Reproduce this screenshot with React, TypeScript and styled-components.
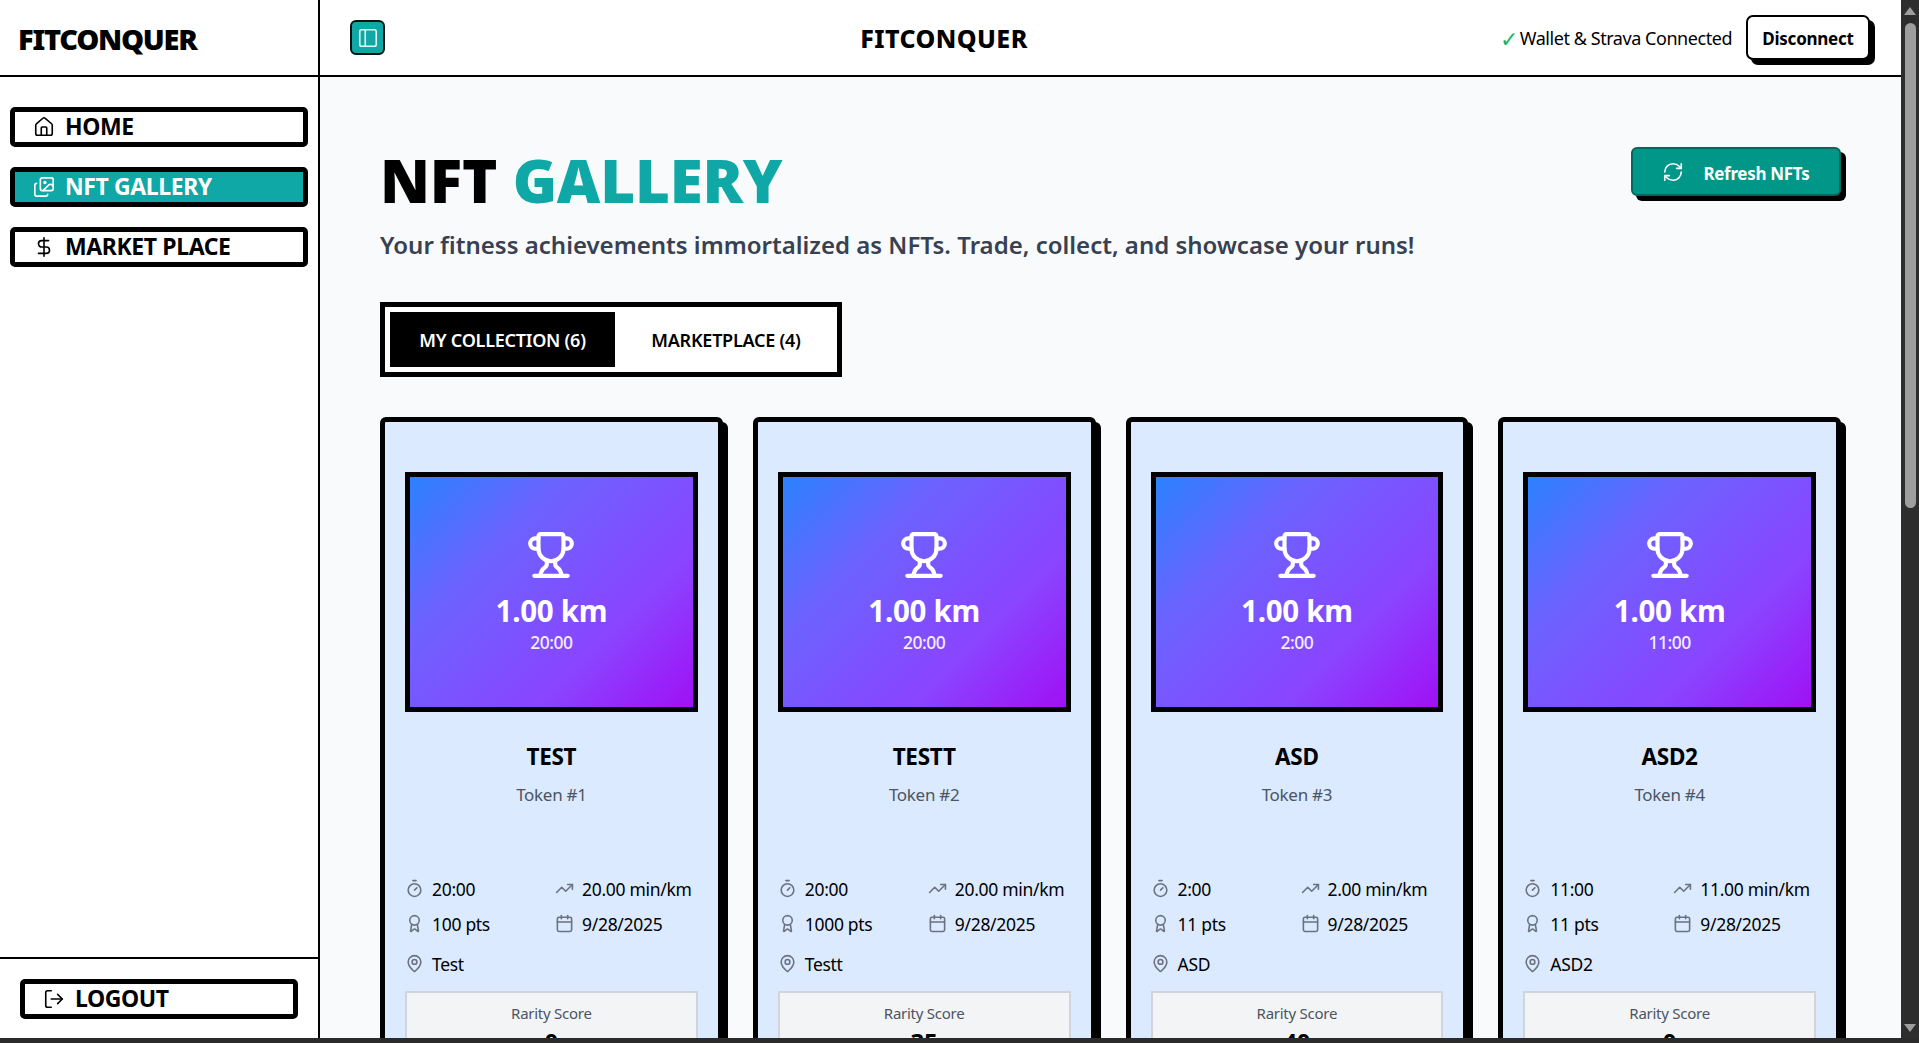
import React from "react";
import styled, { createGlobalStyle } from "styled-components";
import {
  Award,
  Calendar,
  DollarSign,
  Home,
  Images,
  LogOut,
  MapPin,
  PanelLeft,
  RefreshCw,
  Timer,
  TrendingUp,
  Trophy,
} from "lucide-react";

const FONT = `"Noto Sans", "Open Sans", "Liberation Sans", sans-serif`;
const TEAL = "#0fa8a6";

const Global = createGlobalStyle`
  html, body { margin: 0; padding: 0; height: 100%; overflow: hidden; background: #fff; }
  #root { height: 100%; }
  * { box-sizing: border-box; }
  body { font-family: ${FONT}; color: #000; }
`;

const Frame = styled.div`
  height: 1043px;
  display: flex;
  flex-direction: column;
  overflow: hidden;
`;
const Row = styled.div`
  flex: 1;
  min-height: 0;
  display: flex;
`;
const BottomBand = styled.div`
  height: 5px;
  flex: none;
  background: #2b2b2b;
`;

const Sidebar = styled.aside`
  width: 320px;
  flex: none;
  border-right: 2px solid #000;
  display: flex;
  flex-direction: column;
  background: #fff;
`;
const Logo = styled.div`
  height: 77px;
  flex: none;
  border-bottom: 2px solid #000;
  padding: 2px 18px 0;
  display: flex;
  align-items: center;
  font-size: 29px;
  font-weight: 900;
  letter-spacing: -1.25px;
`;
const Nav = styled.nav`
  flex: 1;
  padding: 30px 10px 0;
  display: flex;
  flex-direction: column;
  gap: 20px;
`;
const NavItem = styled.div<{ $active?: boolean }>`
  height: 40px;
  border: 5px solid #000;
  border-radius: 5px;
  display: flex;
  align-items: center;
  gap: 10px;
  padding: 0 0 2px 18px;
  font-size: 23px;
  font-weight: 700;
  letter-spacing: -0.4px;
  color: ${(p) => (p.$active ? "#fff" : "#000")};
  background: ${(p) => (p.$active ? TEAL : "#fff")};
  svg {
    flex: none;
    margin-top: 2px;
  }
`;
const SideFoot = styled.div`
  height: 81px;
  flex: none;
  border-top: 2px solid #000;
  padding: 20px 20px 0;
`;

const Main = styled.div`
  flex: 1;
  min-width: 0;
  display: flex;
  flex-direction: column;
`;
const Header = styled.header`
  height: 77px;
  flex: none;
  border-bottom: 2px solid #000;
  background: #fff;
  display: grid;
  grid-template-columns: 1fr auto 1fr;
  align-items: center;
  padding: 0 31px 0 30px;
`;
const ToggleButton = styled.div`
  width: 35px;
  height: 35px;
  border: 2px solid #111;
  border-radius: 6px;
  background: ${TEAL};
  color: #e4f8f7;
  display: flex;
  align-items: center;
  justify-content: center;
`;
const HeaderTitle = styled.div`
  font-size: 25px;
  font-weight: 800;
  letter-spacing: 0.4px;
  margin: 1px 332px 0 0;
`;
const HeaderRight = styled.div`
  display: flex;
  align-items: center;
  justify-content: flex-end;
  gap: 14px;
`;
const Status = styled.div`
  display: flex;
  align-items: center;
  font-size: 18px;
  letter-spacing: -0.45px;
  white-space: nowrap;
`;
const Check = styled.span`
  color: #10b95f;
  font-size: 22px;
  line-height: 24px;
  margin-right: 2px;
`;
const Disconnect = styled.div`
  width: 124px;
  height: 45px;
  border: 2px solid #000;
  border-radius: 7px;
  box-shadow: 5px 5px 0 #000;
  background: #fff;
  font-size: 17px;
  font-weight: 700;
  letter-spacing: -0.25px;
  padding-top: 1px;
  display: flex;
  align-items: center;
  justify-content: center;
`;

const Content = styled.main`
  flex: 1;
  min-height: 0;
  overflow: hidden;
  background: #f9fafb;
  padding: 69px 60px 0;
`;
const TopRow = styled.div`
  display: flex;
  justify-content: space-between;
  align-items: flex-start;
`;
const Title = styled.h1`
  margin: 0;
  font-size: 60px;
  line-height: 68px;
  font-weight: 900;
  letter-spacing: -0.2px;
`;
const TitleAccent = styled.span`
  color: ${TEAL};
`;
const Refresh = styled.div`
  width: 210px;
  height: 49px;
  margin-top: 1px;
  border: 2px solid #00695c;
  border-radius: 6px;
  box-shadow: 5px 5px 0 #000;
  background: #009688;
  color: #fff;
  font-size: 17px;
  font-weight: 700;
  letter-spacing: -0.3px;
  display: flex;
  align-items: center;
  justify-content: center;
  gap: 19px;
  padding-top: 3px;
  svg {
    margin-top: -3px;
  }
`;
const Subtitle = styled.p`
  margin: 15px 0 0;
  font-size: 24px;
  line-height: 32px;
  font-weight: 600;
  color: #374151;
  letter-spacing: 0;
`;
const Tabs = styled.div`
  margin-top: 41px;
  width: 462px;
  height: 75px;
  border: 5px solid #000;
  padding: 5px;
  background: #fff;
  display: flex;
  gap: 5px;
`;
const Tab = styled.div<{ $active?: boolean; $width: number }>`
  width: ${(p) => p.$width}px;
  display: flex;
  align-items: center;
  justify-content: center;
  font-size: 18px;
  font-weight: 600;
  letter-spacing: -0.25px;
  color: ${(p) => (p.$active ? "#fff" : "#000")};
  background: ${(p) => (p.$active ? "#000" : "#fff")};
`;

const Grid = styled.div`
  margin-top: 40px;
  display: grid;
  grid-template-columns: repeat(4, 1fr);
  gap: 30px;
`;
const Card = styled.article`
  height: 760px;
  border: 5px solid #000;
  border-radius: 6px;
  box-shadow: 5px 5px 0 #000;
  background: #dbeafe;
  padding: 50px 20px 0;
`;
const Art = styled.div`
  height: 240px;
  border: 5px solid #000;
  background: linear-gradient(135deg, #2b82ff 0%, #6c63ff 30%, #8a44ff 70%, #a010f5 100%);
  color: #fff;
  display: flex;
  flex-direction: column;
  align-items: center;
  justify-content: center;
  padding-bottom: 2px;
`;
const Distance = styled.div`
  margin-top: 11px;
  font-size: 29.5px;
  line-height: 40px;
  font-weight: 700;
  letter-spacing: -0.3px;
`;
const ArtTime = styled.div`
  font-size: 17.5px;
  line-height: 22px;
  font-weight: 500;
  letter-spacing: -0.5px;
  opacity: 0.9;
`;
const CardTitle = styled.h3`
  margin: 29px 0 0;
  text-align: center;
  font-size: 22.5px;
  line-height: 32px;
  font-weight: 700;
  letter-spacing: -0.3px;
`;
const TokenLine = styled.div`
  margin-top: 10px;
  height: 93px;
  text-align: center;
  font-size: 17px;
  line-height: 24px;
  color: #4b5563;
  letter-spacing: -0.3px;
`;
const Stats = styled.div`
  display: grid;
  grid-template-columns: 150px 1fr;
  row-gap: 10px;
`;
const Stat = styled.div`
  height: 25px;
  display: flex;
  align-items: center;
  gap: 8px;
  font-size: 17.5px;
  letter-spacing: -0.3px;
  white-space: nowrap;
  color: #000;
  svg {
    color: #6b7280;
    flex: none;
  }
`;
const Place = styled(Stat)`
  margin-top: 15px;
`;
const Rarity = styled.div`
  margin-top: 15px;
  height: 120px;
  border: 2px solid #d1d5db;
  background: #f3f4f6;
  text-align: center;
  padding-top: 10px;
`;
const RarityLabel = styled.div`
  font-size: 15px;
  line-height: 20px;
  color: #4b5563;
  letter-spacing: -0.25px;
`;
const RarityValue = styled.div`
  margin-top: 3px;
  font-size: 24px;
  line-height: 32px;
  font-weight: 700;
`;

const ScrollTrack = styled.div`
  width: 18px;
  flex: none;
  background: #2d2d2d;
  display: flex;
  flex-direction: column;
  align-items: center;
`;
const ScrollArrow = styled.div<{ $down?: boolean }>`
  width: 0;
  height: 0;
  flex: none;
  margin: ${(p) => (p.$down ? "auto 0 6px" : "7px 0 8px")};
  border-left: 6px solid transparent;
  border-right: 6px solid transparent;
  ${(p) =>
    p.$down
      ? "border-top: 8px solid #9e9e9e;"
      : "border-bottom: 8px solid #9e9e9e;"}
`;
const ScrollThumb = styled.div`
  width: 11px;
  height: 485px;
  flex: none;
  background: #9e9e9e;
  border-radius: 6px;
`;

const cards = [
  { name: "TEST", token: 1, time: "20:00", pace: "20.00", pts: 100, place: "Test", score: 0 },
  { name: "TESTT", token: 2, time: "20:00", pace: "20.00", pts: 1000, place: "Testt", score: 35 },
  { name: "ASD", token: 3, time: "2:00", pace: "2.00", pts: 11, place: "ASD", score: 40 },
  { name: "ASD2", token: 4, time: "11:00", pace: "11.00", pts: 11, place: "ASD2", score: 0 },
];

export default function App() {
  return (
    <Frame>
      <Global />
      <Row>
        <Sidebar>
          <Logo>FITCONQUER</Logo>
          <Nav>
            <NavItem>
              <Home size={22} strokeWidth={1.75} />
              HOME
            </NavItem>
            <NavItem $active>
              <Images size={22} strokeWidth={1.75} />
              NFT GALLERY
            </NavItem>
            <NavItem>
              <DollarSign size={22} strokeWidth={1.75} />
              MARKET PLACE
            </NavItem>
          </Nav>
          <SideFoot>
            <NavItem>
              <LogOut size={22} strokeWidth={1.75} />
              LOGOUT
            </NavItem>
          </SideFoot>
        </Sidebar>
        <Main>
          <Header>
            <ToggleButton>
              <PanelLeft size={22} strokeWidth={1.75} />
            </ToggleButton>
            <HeaderTitle>FITCONQUER</HeaderTitle>
            <HeaderRight>
              <Status>
                <Check>✓</Check>Wallet &amp; Strava Connected
              </Status>
              <Disconnect>Disconnect</Disconnect>
            </HeaderRight>
          </Header>
          <Content>
            <TopRow>
              <Title>
                NFT <TitleAccent>GALLERY</TitleAccent>
              </Title>
              <Refresh>
                <RefreshCw size={22} strokeWidth={1.75} />
                Refresh NFTs
              </Refresh>
            </TopRow>
            <Subtitle>
              Your fitness achievements immortalized as NFTs. Trade, collect, and showcase your runs!
            </Subtitle>
            <Tabs>
              <Tab $active $width={225}>
                MY COLLECTION (6)
              </Tab>
              <Tab $width={212}>MARKETPLACE (4)</Tab>
            </Tabs>
            <Grid>
              {cards.map((c) => (
                <Card key={c.token}>
                  <Art>
                    <Trophy size={50} strokeWidth={2} />
                    <Distance>1.00 km</Distance>
                    <ArtTime>{c.time}</ArtTime>
                  </Art>
                  <CardTitle>{c.name}</CardTitle>
                  <TokenLine>Token #{c.token}</TokenLine>
                  <Stats>
                    <Stat>
                      <Timer size={19} />
                      {c.time}
                    </Stat>
                    <Stat>
                      <TrendingUp size={19} />
                      {c.pace} min/km
                    </Stat>
                    <Stat>
                      <Award size={19} />
                      {c.pts} pts
                    </Stat>
                    <Stat>
                      <Calendar size={19} />
                      9/28/2025
                    </Stat>
                  </Stats>
                  <Place>
                    <MapPin size={19} />
                    {c.place}
                  </Place>
                  <Rarity>
                    <RarityLabel>Rarity Score</RarityLabel>
                    <RarityValue>{c.score}</RarityValue>
                  </Rarity>
                </Card>
              ))}
            </Grid>
          </Content>
        </Main>
        <ScrollTrack>
          <ScrollArrow />
          <ScrollThumb />
          <ScrollArrow $down />
        </ScrollTrack>
      </Row>
      <BottomBand />
    </Frame>
  );
}
